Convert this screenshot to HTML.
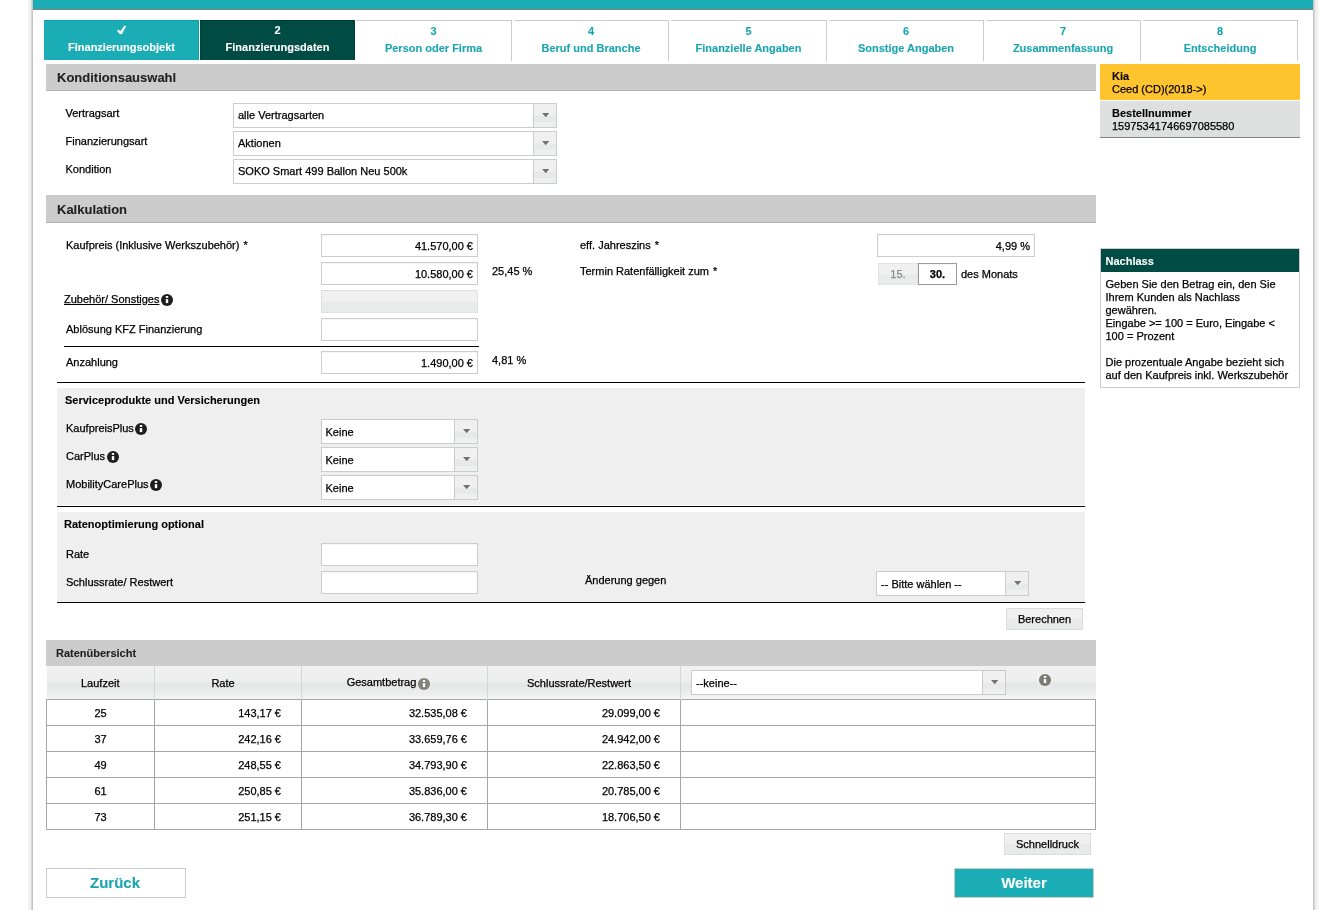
<!DOCTYPE html>
<html lang="de">
<head>
<meta charset="utf-8">
<title>Finanzierungsdaten</title>
<style>
html,body{margin:0;padding:0;background:#fff;}
body{width:1319px;height:910px;overflow:hidden;position:relative;font-family:"Liberation Sans",Arial,sans-serif;font-size:11px;color:#000;-webkit-text-stroke:0.25px;}
*{box-sizing:border-box;}
.page{position:absolute;left:33px;top:0;width:1280px;height:930px;background:#fff;}
.shl{position:absolute;left:28px;top:0;width:5px;height:910px;background:linear-gradient(to right,#f3f3f3 0,#f3f3f3 1px,#f0f0f0 1px,#f0f0f0 2px,#ececec 2px,#ececec 3px,#dadada 3px,#dadada 4px,#c4c4c4 4px);}
.shr{position:absolute;left:1313px;top:0;width:6px;height:910px;background:linear-gradient(to right,#c8c8c8 0,#c8c8c8 1px,#d6d6d6 1px,#d6d6d6 2px,#ececec 2px,#ececec 3px,#f0f0f0 3px,#f0f0f0 4px,#f2f2f2 4px,#f2f2f2 5px,#f6f6f6 5px);}
.topbar{position:absolute;left:33px;top:0;width:1280px;height:10px;background:#1aadb5;border-bottom:1px solid #877f78;}
.abs{position:absolute;}
.t{position:absolute;white-space:nowrap;line-height:14px;font-size:11px;}
.b{font-weight:bold;}
.b,.hd,.tabs li{-webkit-text-stroke:0.1px;}
/* tabs */
.tabs{position:absolute;left:0;top:20px;margin:0;padding:0;list-style:none;height:40px;}
.tabs li{position:absolute;top:0;height:40px;text-align:center;font-weight:bold;font-size:11px;line-height:17px;padding:2px 0 0 0;height:41px;color:#1aa5b0;background:#fff;border-top:1px solid #ccc;border-right:1px solid #ccc;}
.tabs li.done{background:#1aadb5;color:#fff;border:0;border-top:1px solid #0ca3ad;border-right:1px solid #0ca3ad;padding:1px 0 0 1px;height:40px;}
.tabs li.act{background:#004b44;color:#fff;border:1px solid #003d37;border-bottom:0;padding:1px 0 0 0;height:40px;}
.tabs li span{display:block;}
/* headers */
.hd{position:absolute;left:46px;width:1050px;height:27px;background:#cccccc;border-bottom:1px solid #b2b2b2;font-weight:bold;font-size:13px;line-height:28px;padding-left:11px;color:#222;}
/* inputs */
.in{position:absolute;height:23px;background:#fff;border:1px solid #ccc;font-size:11px;line-height:23px;text-align:right;padding:0 4px;white-space:nowrap;box-shadow:inset 0 1px 1px rgba(0,0,0,.04);}
.in.dis{background:linear-gradient(#f0f0f0 0,#f0f0f0 50%,#e9ebea 54%);border:1px dotted #d2d2d2;box-shadow:none;}
.sel{position:absolute;background:#fff;border:1px solid #ccc;font-size:11px;white-space:nowrap;padding-left:4px;}
.sel i{position:absolute;right:0;top:0;bottom:0;width:23px;background:linear-gradient(#f0f0f0 0,#f0f0f0 48%,#e8eae9 52%,#e8eae9 76%,#eeefef 80%);border-left:1px solid #ccc;}
.sel i:after{content:"";position:absolute;left:8px;top:calc(50% - 2.5px);width:7.4px;height:4.3px;background:#74736b;clip-path:polygon(0 0,100% 0,50% 100%);}
.hr{position:absolute;height:1px;background:#000;}
.panel{position:absolute;left:57px;width:1028px;background:#efefef;}
.btn{position:absolute;background:linear-gradient(#f0f0f0 0,#f0f0f0 48%,#e8eae9 52%,#e9ebea 100%);border:1px solid #dcdcdc;text-align:center;font-size:11px;}
.ic{position:absolute;width:12px;height:12px;}
.rt{position:absolute;left:46px;top:666px;width:1050px;border-collapse:collapse;table-layout:fixed;font-size:11px;}
.rt th{height:33px;background:linear-gradient(#f0f0f0 0,#eeeeee 45%,#e5e7e6 54%,#e8eae9 74%,#f3f3f3 100%);font-weight:normal;text-align:center;border-left:1px solid #d6d6d6;padding:2px 10px 0 0;}
.rt th:first-child{border-left:0;padding-right:0;}
.rt td{height:26px;border:1px solid #a6a6a6;text-align:right;padding:2px 20px 0 0;background:#fff;}
.rt td.c{text-align:center;padding:2px 0 0 0;}
</style>
</head>
<body>
<div id="wrap" style="position:absolute;left:0;top:0;width:1319px;height:910px;will-change:transform">
<div class="page"></div><div class="shl"></div><div class="shr"></div>
<div class="topbar"></div>

<ul class="tabs">
 <li class="done" style="left:44px;width:155px"><span>&nbsp;<svg width="12" height="12" viewBox="115 24 12 12" style="position:absolute;left:71px;top:3px"><path d="M116.9,30.4 L118.2,29.7 L120.4,31.2 L124.3,25.7 L126.2,26.0 L122,34.1 L119.8,34.2 Z" fill="#fff"/></svg></span><span>Finanzierungsobjekt</span></li>
 <li class="act" style="left:200px;width:155px"><span>2</span><span>Finanzierungsdaten</span></li>
 <li style="left:356px;width:156px"><span>3</span><span>Person oder Firma</span></li>
 <li style="left:514px;width:155px"><span>4</span><span>Beruf und Branche</span></li>
 <li style="left:671px;width:156px"><span>5</span><span>Finanzielle Angaben</span></li>
 <li style="left:829px;width:155px"><span>6</span><span>Sonstige Angaben</span></li>
 <li style="left:986px;width:155px"><span>7</span><span>Zusammenfassung</span></li>
 <li style="left:1143px;width:155px"><span>8</span><span>Entscheidung</span></li>
</ul>

<div class="hd" style="top:64px">Konditionsauswahl</div>
<div class="t" style="left:65.5px;top:106px">Vertragsart</div>
<div class="t" style="left:65.5px;top:134px">Finanzierungsart</div>
<div class="t" style="left:65.5px;top:162px">Kondition</div>
<div class="sel" style="left:233px;top:103px;width:324px;height:25px;line-height:23px">alle Vertragsarten<i></i></div>
<div class="sel" style="left:233px;top:131px;width:324px;height:25px;line-height:23px">Aktionen<i></i></div>
<div class="sel" style="left:233px;top:159px;width:324px;height:25px;line-height:23px">SOKO Smart 499 Ballon Neu 500k<i></i></div>

<div class="hd" style="top:195px;height:28px;line-height:29px">Kalkulation</div>
<div class="t" style="left:66px;top:238px">Kaufpreis (Inklusive Werkszubehör) <span style="margin-left:1px">*</span></div>
<div class="in" style="left:321px;top:234px;width:157px">41.570,00 €</div>
<div class="in" style="left:321px;top:262px;width:157px">10.580,00 €</div>
<div class="t" style="left:492px;top:264px">25,45 %</div>
<div class="t" style="left:64px;top:292px;text-decoration:underline">Zubehör/ Sonstiges</div>
<svg class="ic" style="left:161px;top:294px" viewBox="0 0 12 12"><circle cx="6" cy="6" r="6" fill="#1e1e1e"/><rect x="4.8" y="2" width="2.4" height="1.9" fill="#fff"/><rect x="4.8" y="5.1" width="2.4" height="4" fill="#fff"/></svg>
<div class="in dis" style="left:321px;top:290px;width:157px"></div>
<div class="t" style="left:66px;top:322px">Ablösung KFZ Finanzierung</div>
<div class="in" style="left:321px;top:318px;width:157px"></div>
<div class="hr" style="left:64px;top:346px;width:415px"></div>
<div class="t" style="left:66px;top:355px">Anzahlung</div>
<div class="in" style="left:321px;top:351px;width:157px">1.490,00 €</div>
<div class="t" style="left:492px;top:353px">4,81 %</div>
<div class="t" style="left:580px;top:238px">eff. Jahreszins <span style="margin-left:1px">*</span></div>
<div class="in" style="left:877px;top:234px;width:158px">4,99 %</div>
<div class="t" style="left:580px;top:264px">Termin Ratenfälligkeit zum <span style="margin-left:1px">*</span></div>
<div class="in dis" style="left:878px;top:263px;width:40px;height:22px;line-height:21px;text-align:center;color:#8a8a8a;border-color:#dcdcdc">15.</div>
<div class="in" style="left:918px;top:263px;width:39px;height:22px;line-height:21px;text-align:center;font-weight:bold;border-color:#999">30.</div>
<div class="t" style="left:961px;top:267px">des Monats</div>
<div class="hr" style="left:57px;top:382px;width:1028px"></div>

<div class="panel" style="top:388px;height:117px"></div>
<div class="t b" style="left:65px;top:393px">Serviceprodukte und Versicherungen</div>
<div class="t" style="left:66px;top:421px">KaufpreisPlus</div>
<svg class="ic" style="left:135px;top:423px" viewBox="0 0 12 12"><circle cx="6" cy="6" r="6" fill="#1e1e1e"/><rect x="4.8" y="2" width="2.4" height="1.9" fill="#fff"/><rect x="4.8" y="5.1" width="2.4" height="4" fill="#fff"/></svg>
<div class="t" style="left:66px;top:449px">CarPlus</div>
<svg class="ic" style="left:107px;top:451px" viewBox="0 0 12 12"><circle cx="6" cy="6" r="6" fill="#1e1e1e"/><rect x="4.8" y="2" width="2.4" height="1.9" fill="#fff"/><rect x="4.8" y="5.1" width="2.4" height="4" fill="#fff"/></svg>
<div class="t" style="left:66px;top:477px">MobilityCarePlus</div>
<svg class="ic" style="left:150px;top:479px" viewBox="0 0 12 12"><circle cx="6" cy="6" r="6" fill="#1e1e1e"/><rect x="4.8" y="2" width="2.4" height="1.9" fill="#fff"/><rect x="4.8" y="5.1" width="2.4" height="4" fill="#fff"/></svg>
<div class="sel" style="left:321px;top:419px;width:157px;height:25px;line-height:24px;padding-left:3.5px">Keine<i></i></div>
<div class="sel" style="left:321px;top:447px;width:157px;height:25px;line-height:24px;padding-left:3.5px">Keine<i></i></div>
<div class="sel" style="left:321px;top:475px;width:157px;height:25px;line-height:24px;padding-left:3.5px">Keine<i></i></div>
<div class="hr" style="left:57px;top:506px;width:1028px"></div>
<div class="panel" style="top:512px;height:90px"></div>
<div class="t b" style="left:64px;top:517px">Ratenoptimierung optional</div>
<div class="t" style="left:66px;top:547px">Rate</div>
<div class="in" style="left:321px;top:543px;width:157px"></div>
<div class="t" style="left:66px;top:575px">Schlussrate/ Restwert</div>
<div class="in" style="left:321px;top:571px;width:157px"></div>
<div class="t" style="left:585px;top:573px">Änderung gegen</div>
<div class="sel" style="left:876px;top:571px;width:153px;height:25px;line-height:25px">-- Bitte wählen --<i></i></div>
<div class="hr" style="left:57px;top:602px;width:1028px"></div>
<div class="btn" style="left:1006px;top:608px;width:77px;height:22px;line-height:20px">Berechnen</div>

<div class="abs b" style="left:46px;top:640px;width:1050px;height:26px;background:#ccc;font-size:11px;line-height:26px;padding-left:10px;color:#222">Ratenübersicht</div>
<table class="rt">
<thead><tr><th style="width:108px">Laufzeit</th><th style="width:147px">Rate</th><th style="width:186px"><span style="position:relative;top:-1px;left:-1px">Gesamtbetrag</span><span style="display:inline-block;width:14px"></span></th><th style="width:193px">Schlussrate/Restwert</th><th></th></tr></thead>
<tbody>
<tr><td class="c">25</td><td>143,17 €</td><td>32.535,08 €</td><td>29.099,00 €</td><td></td></tr>
<tr><td class="c">37</td><td>242,16 €</td><td>33.659,76 €</td><td>24.942,00 €</td><td></td></tr>
<tr><td class="c">49</td><td>248,55 €</td><td>34.793,90 €</td><td>22.863,50 €</td><td></td></tr>
<tr><td class="c">61</td><td>250,85 €</td><td>35.836,00 €</td><td>20.785,00 €</td><td></td></tr>
<tr><td class="c">73</td><td>251,15 €</td><td>36.789,30 €</td><td>18.706,50 €</td><td></td></tr>
</tbody></table>
<svg class="ic" style="left:418px;top:678px" viewBox="0 0 12 12"><circle cx="6" cy="6" r="6" fill="#82817b"/><rect x="4.8" y="2" width="2.4" height="1.9" fill="#fff"/><rect x="4.8" y="5.1" width="2.4" height="4" fill="#fff"/></svg>
<svg class="ic" style="left:1039px;top:674px" viewBox="0 0 12 12"><circle cx="6" cy="6" r="6" fill="#7a7972"/><rect x="4.8" y="2" width="2.4" height="1.9" fill="#fff"/><rect x="4.8" y="5.1" width="2.4" height="4" fill="#fff"/></svg>
<div class="sel" style="left:691px;top:670px;width:315px;height:25px;line-height:25px">--keine--<i></i></div>
<div class="btn" style="left:1004px;top:833px;width:87px;height:22px;line-height:21px">Schnelldruck</div>
<div class="abs b" style="left:46px;top:868px;width:140px;height:30px;border:1px solid #ccc;background:#fff;color:#1aa5b0;font-size:15px;line-height:28px;text-align:center;padding-right:2px">Zurück</div>
<div class="abs b" style="left:954px;top:868px;width:140px;height:30px;border:1px solid #ccc;background:#1aadb5;color:#fff;font-size:15px;line-height:28px;text-align:center">Weiter</div>

<div class="abs" style="left:1100px;top:64px;width:200px;height:36px;background:#ffc42e"></div>
<div class="t b" style="left:1112px;top:69px">Kia</div>
<div class="t" style="left:1112px;top:82px">Ceed (CD)(2018-&gt;)</div>
<div class="abs" style="left:1100px;top:101px;width:200px;height:37px;background:#dedfdf;border-bottom:1px solid #84837b"></div>
<div class="t b" style="left:1112px;top:106px">Bestellnummer</div>
<div class="t" style="left:1112px;top:119px">15975341746697085580</div>
<div class="abs" style="left:1100px;top:248px;width:200px;height:140px;border:1px solid #ccc;background:#fff"></div>
<div class="abs b" style="left:1101px;top:249px;width:198px;height:23px;background:#004b44;color:#fff;line-height:24px;padding-left:4.5px">Nachlass</div>
<div class="abs" style="left:1105.5px;top:278px;width:190px;line-height:13px">Geben Sie den Betrag ein, den Sie<br>Ihrem Kunden als Nachlass<br>gewähren.<br>Eingabe &gt;= 100 = Euro, Eingabe &lt;<br>100 = Prozent<br><br>Die prozentuale Angabe bezieht sich<br>auf den Kaufpreis inkl. Werkszubehör</div>

</div>
</body>
</html>
